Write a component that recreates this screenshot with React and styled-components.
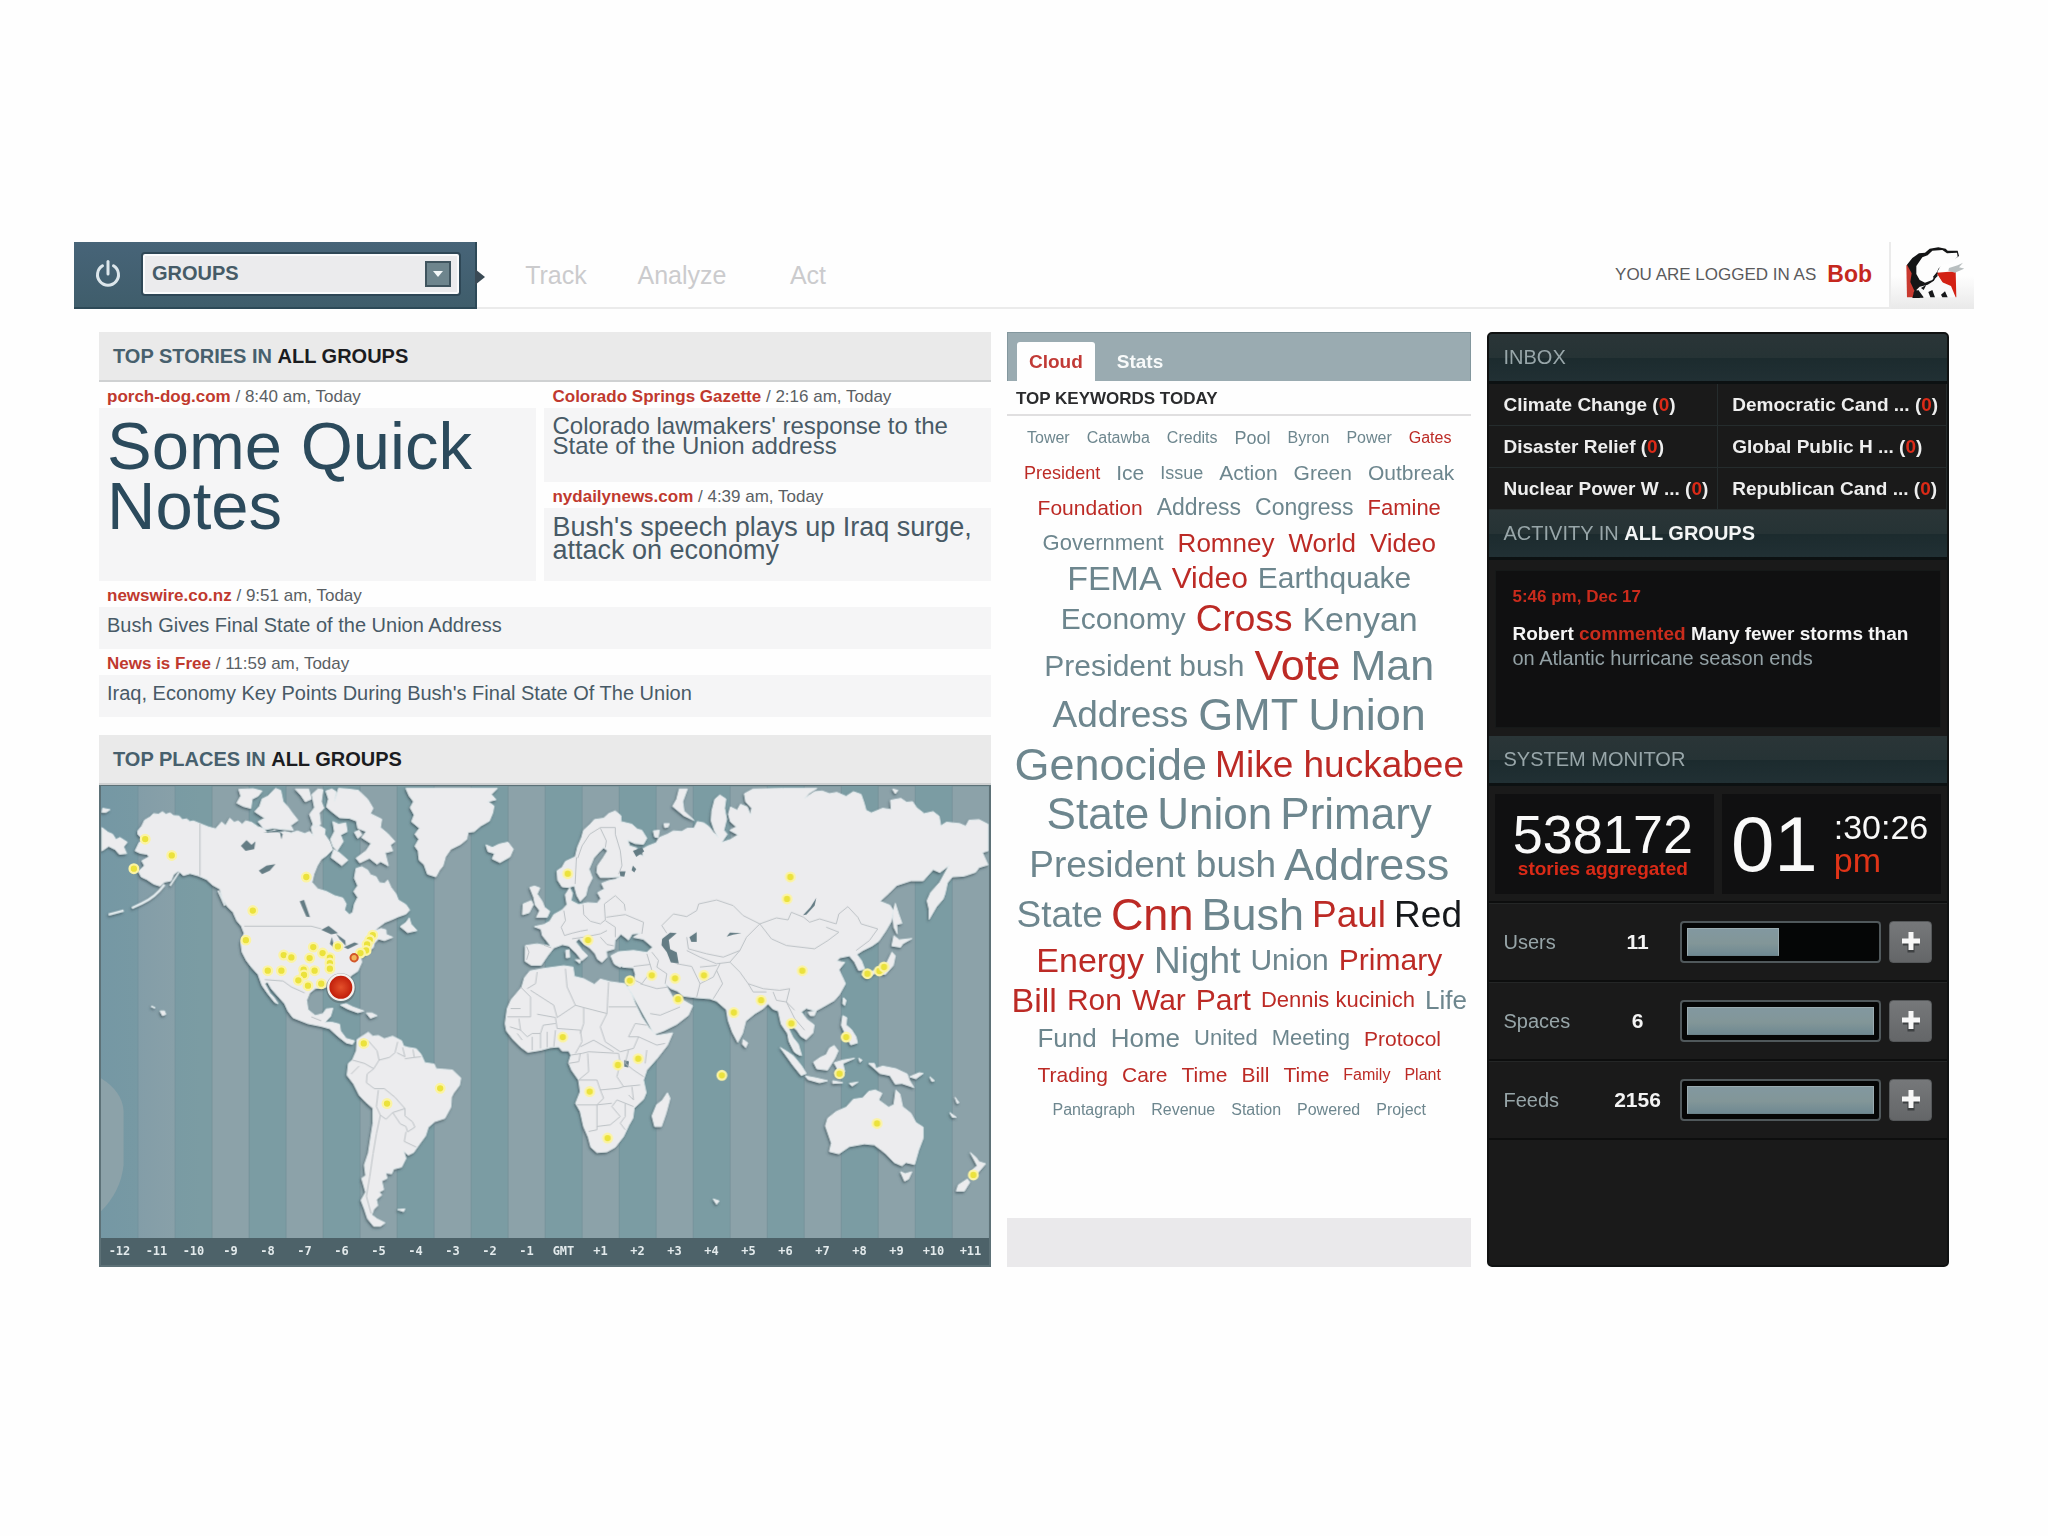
import React from 'react'
import styled, { createGlobalStyle } from 'styled-components'

const GlobalStyle = createGlobalStyle`
    * {
        box-sizing: border-box;
    }
    body {
        margin: 0;
        background-color: #FEFEFE;
        font-family: 'Liberation Sans', Arial, sans-serif;
    }
    h1, h2, h3, p, ul {
        margin: 0;
        padding: 0;
        font-weight: normal;
    }
    a {
        color: inherit;
        text-decoration: none;
    }
    button {
        font-family: inherit;
        cursor: pointer;
    }
`

const Page = styled.div`
    padding: 242px 74px;
`

const Header = styled.header`
    display: flex;
    height: 67px;
    border-bottom: 2px solid #EBEBEB;
`

const GroupBar = styled.div`
    position: relative;
    display: flex;
    align-items: center;
    gap: 19px;
    width: 403px;
    height: 67px;
    padding: 0 16px 2px 18px;
    background: linear-gradient(#476478, #3F5D6B);
    border-bottom: 2px solid #2D4957;
    border-right: 2px solid #2D4957;

    &::after {
        content: '';
        position: absolute;
        left: 100%;
        top: 27px;
        border: 8px solid transparent;
        border-left: 10px solid #3A4A55;
        border-right: none;
    }
`

const PowerButton = styled.button`
    display: flex;
    padding: 0;
    border: none;
    background: none;
`

const SelectBox = styled.div`
    position: relative;
    flex: 1;

    svg {
        position: absolute;
        right: 8px;
        top: 7px;
        pointer-events: none;
    }
`

const GroupSelect = styled.select`
    appearance: none;
    display: block;
    width: 100%;
    height: 40px;
    padding: 0 40px 2px 7px;
    border: 2px solid #FAFBFC;
    border-radius: 2px;
    background-color: #EBEBED;
    box-shadow: 0 0 0 2px #2E4756;
    color: #465B67;
    font-family: inherit;
    font-weight: 700;
    font-size: 20px;
`

const Nav = styled.nav`
    display: flex;
    flex: 1;
    align-items: center;
    padding-left: 16px;
    color: #CBCBCD;
    font-size: 25px;
`

const NavLink = styled.a`
    width: 126px;
    padding-top: 1px;
    text-align: center;
`

const Login = styled.div`
    display: flex;
    align-items: center;
    gap: 11px;
    padding-right: 17px;
    color: #5A5A5C;
    font-size: 17px;

    a {
        color: #C5281E;
        font-weight: 700;
        font-size: 23px;
    }
`

const Avatar = styled.div`
    width: 85px;
    height: 67px;
    padding: 4px 0 0 14px;
    border-left: 2px solid #EBEBEB;
    background: linear-gradient(#FEFEFE 50%, #E9E9E9);
`

const Main = styled.main`
    display: grid;
    grid-template-columns: 891fr 464fr 461fr;
    gap: 16px;
    padding: 23px 25px 0;
`

const Column = styled.div`
    display: flex;
    flex-direction: column;
    gap: 18px;
`

const PanelTitle = styled.h2`
    height: 50px;
    padding: 0 14px;
    border-bottom: 2px solid #CFD1D2;
    background-color: #EAEAEA;
    color: #47606D;
    font-weight: 700;
    font-size: 20px;
    line-height: 48px;

    strong {
        color: #1B1C1F;
    }
`

const TopStories = styled.div`
    display: grid;
    grid-template-columns: 437fr 446fr;
    column-gap: 8px;
`

const StoryStack = styled.div`
    display: flex;
    flex-direction: column;
`

const Story = styled.article`
    display: flex;
    flex-direction: column;
    flex: 1 1 auto;
`

const StoryMeta = styled.p`
    height: 26px;
    padding: 4px 8px 0;
    color: #5A6064;
    font-size: 17px;
    line-height: 22px;

    a {
        color: #C0392E;
        font-weight: 700;
    }
`

const StoryBody = styled.div`
    flex: 1;
    min-height: ${props => props.$minHeight}px;
    padding: 8px;
    background-color: #F5F5F6;
`

const StoryTitle = styled.h3`
    color: ${props => props.$size > 60 ? '#2B4A5C' : '#485A66'};
    font-size: ${props => props.$size}px;
    line-height: ${props => props.$line}px;
`

const MapBox = styled.div`
    border: 2px solid #5D7177;
    border-top-width: 1px;
    background-color: #7C9CA4;

    svg {
        display: block;
        width: 100%;
    }
`

const ZoneList = styled.div`
    display: grid;
    grid-template-columns: repeat(24, 1fr);
    height: 27px;
    background-color: #4D6269;
    color: #E3EAEC;
    font-family: 'DejaVu Sans Mono', monospace;
    font-weight: 700;
    font-size: 12px;
    line-height: 27px;
    text-align: center;
`

const CloudPanel = styled.section`
    display: flex;
    flex-direction: column;
`

const TabBar = styled.div`
    display: flex;
    align-items: flex-end;
    gap: 10px;
    height: 49px;
    padding-left: 9px;
    background-color: #9AABB1;
    border: 1px solid #83979E;
    border-bottom: none;
`

const Tab = styled.button`
    height: 39px;
    padding: 0 12px;
    border: none;
    border-radius: 3px 3px 0 0;
    background-color: ${props => props.$active ? '#FEFEFE' : 'transparent'};
    color: ${props => props.$active ? '#C13A36' : '#F8FAFA'};
    font-weight: 700;
    font-size: 19px;
`

const CloudTitle = styled.h2`
    height: 35px;
    padding-left: 9px;
    border-bottom: 2px solid #E0DFE0;
    color: #2A2B2D;
    font-weight: 700;
    font-size: 17px;
    line-height: 35px;
`

const Cloud = styled.div`
    flex: 1;
    padding-top: 4px;
`

const CloudRow = styled.div`
    display: flex;
    justify-content: center;
    align-items: center;
    gap: ${props => props.$gap}px;
    height: ${props => props.$height}px;
    white-space: nowrap;
`

const wordColors = { red: '#BC2A25', grey: '#6D868E', black: '#15181B' }

const Word = styled.a`
    color: ${props => wordColors[props.$tone]};
    font-size: ${props => props.$size}px;
    line-height: 1;
`

const CloudFooter = styled.div`
    height: 49px;
    background-color: #EAE9EB;
`

const Sidebar = styled.aside`
    display: flex;
    flex-direction: column;
    border: 2px solid #101212;
    border-radius: 5px;
    background-color: #1A1A1A;
    overflow: hidden;
`

const SideTitle = styled.h2`
    height: 50px;
    padding-left: 14px;
    border-bottom: 3px solid #0C1112;
    background: linear-gradient(#2A3537 0%, #263335 50%, #1C2B2E 52%, #213034 100%);
    color: #98A6A9;
    font-size: 20px;
    line-height: 46px;

    strong {
        color: #F3F5F5;
    }
`

const Inbox = styled.div`
    display: grid;
    grid-template-columns: 1fr 1fr;
`

const InboxLink = styled.a`
    height: 42px;
    padding-left: 14px;
    border-bottom: 1px solid #252C2D;
    border-right: 1px solid #252C2D;
    color: #EEEEEE;
    font-weight: 700;
    font-size: 19px;
    line-height: 42px;
    white-space: nowrap;

    em {
        color: #DB2A17;
        font-style: normal;
    }
`

const ActivityWrap = styled.div`
    padding: 10px 6px 8px;
`

const Activity = styled.div`
    min-height: 158px;
    padding: 14px 16px;
    border: 1px solid #161919;
    background-color: #101011;
`

const ActivityTime = styled.p`
    margin-bottom: 12px;
    color: #CB2B1C;
    font-weight: 700;
    font-size: 17px;
    line-height: 24px;
`

const ActivityText = styled.p`
    color: #F5F5F5;
    font-weight: 700;
    font-size: 19px;
    line-height: 25px;

    em {
        color: #C92C1C;
        font-style: normal;
    }
    span {
        color: #93A1A5;
        font-weight: 400;
        font-size: 20px;
    }
`

const Counters = styled.div`
    display: grid;
    grid-template-columns: 1fr 1fr;
    gap: 8px;
    padding: 8px 6px 7px;
    border-bottom: 2px solid #0D0E0E;
`

const Counter = styled.div`
    display: flex;
    align-items: center;
    justify-content: center;
    height: 100px;
    padding-right: 4px;
    background-color: #101011;
    color: #F9F9F9;
`

const StoryCount = styled.p`
    font-size: 54px;
    line-height: 50px;
    text-align: center;

    span {
        display: block;
        color: #DA2A17;
        font-weight: 700;
        font-size: 19px;
        line-height: 20px;
    }
`

const Clock = styled.div`
    display: flex;
    align-items: center;
    gap: 16px;
`

const Hour = styled.span`
    font-size: 78px;
    line-height: 80px;
`

const Minutes = styled.span`
    font-size: 34px;
    line-height: 33px;

    em {
        display: block;
        color: #E03418;
        font-style: normal;
    }
`

const MonitorRow = styled.div`
    display: grid;
    grid-template-columns: 91px 70px 1fr 43px;
    align-items: center;
    column-gap: 8px;
    height: 79px;
    padding: 0 15px 0 14px;
    border-top: 1px solid #242626;
    border-bottom: 2px solid #0D0E0E;
    color: #97A5A8;
    font-size: 20px;

    strong {
        color: #F4F4F4;
        font-size: 21px;
        text-align: center;
    }
`

const Meter = styled.div`
    height: 42px;
    padding: 5px;
    border: 2px solid #50585B;
    border-radius: 4px;
    background-color: #050606;
`

const MeterFill = styled.div`
    height: 100%;
    border: 1px solid #9AABB0;
    border-bottom-color: #6B8289;
    background: linear-gradient(#8298A0, #829698 55%, #6F8992);
`

const AddButton = styled.button`
    display: flex;
    align-items: center;
    justify-content: center;
    height: 42px;
    padding: 0;
    border: 1px solid #55585A;
    border-radius: 4px;
    background: linear-gradient(#76787A, #646668);
`

const zones = ['-12', '-11', '-10', '-9', '-8', '-7', '-6', '-5', '-4', '-3', '-2', '-1', 'GMT',
    '+1', '+2', '+3', '+4', '+5', '+6', '+7', '+8', '+9', '+10', '+11']

// each word is [text, font size, tone], grey when no tone is given
const cloudRows = [
    { height: 35, gap: 17, words: [['Tower', 16], ['Catawba', 16], ['Credits', 16], ['Pool', 18], ['Byron', 16], ['Power', 16], ['Gates', 16, 'red']] },
    { height: 35, gap: 16, words: [['President', 18, 'red'], ['Ice', 21], ['Issue', 18], ['Action', 21], ['Green', 21], ['Outbreak', 21]] },
    { height: 35, gap: 14, words: [['Foundation', 21, 'red'], ['Address', 23], ['Congress', 23], ['Famine', 22, 'red']] },
    { height: 35, gap: 14, words: [['Government', 22], ['Romney', 26, 'red'], ['World', 26, 'red'], ['Video', 26, 'red']] },
    { height: 36, gap: 10, words: [['FEMA', 34], ['Video', 30, 'red'], ['Earthquake', 30]] },
    { height: 45, gap: 10, words: [['Economy', 30], ['Cross', 37, 'red'], ['Kenyan', 34]] },
    { height: 49, gap: 10, words: [['President bush', 30], ['Vote', 43, 'red'], ['Man', 43]] },
    { height: 49, gap: 10, words: [['Address', 37], ['GMT', 45], ['Union', 45]] },
    { height: 50, gap: 8, words: [['Genocide', 45], ['Mike huckabee', 37, 'red']] },
    { height: 50, gap: 8, words: [['State', 44], ['Union', 44], ['Primary', 44]] },
    { height: 50, gap: 8, words: [['President bush', 37], ['Address', 45]] },
    { height: 50, gap: 8, words: [['State', 37], ['Cnn', 45, 'red'], ['Bush', 45], ['Paul', 37, 'red'], ['Red', 37, 'black']] },
    { height: 42, gap: 10, words: [['Energy', 34, 'red'], ['Night', 37], ['Union', 30], ['Primary', 30, 'red']] },
    { height: 38, gap: 10, words: [['Bill', 34, 'red'], ['Ron', 30, 'red'], ['War', 30, 'red'], ['Part', 30, 'red'], ['Dennis kucinich', 22, 'red'], ['Life', 26]] },
    { height: 38, gap: 14, words: [['Fund', 26], ['Home', 26], ['United', 22], ['Meeting', 22], ['Protocol', 21, 'red']] },
    { height: 35, gap: 14, words: [['Trading', 21, 'red'], ['Care', 21, 'red'], ['Time', 21, 'red'], ['Bill', 21, 'red'], ['Time', 21, 'red'], ['Family', 16, 'red'], ['Plant', 16, 'red']] },
    { height: 35, gap: 16, words: [['Pantagraph', 16], ['Revenue', 16], ['Station', 16], ['Powered', 16], ['Project', 16]] },
]

const inbox = ['Climate Change', 'Democratic Cand ...', 'Disaster Relief', 'Global Public H ...', 'Nuclear Power W ...', 'Republican Cand ...']

const monitors = [
    { name: 'Users', count: 11, fill: 49 },
    { name: 'Spaces', count: 6, fill: 100 },
    { name: 'Feeds', count: 2156, fill: 100 },
]

const westLand = [
    // North and Central America
    'M138 180L150 165 158 148 175 138 185 128 200 130 212 122 222 130 235 126 245 134 262 135 272 146 285 144 295 152 305 150 325 158 350 168 372 174 390 153 402 164 415 142 428 154 440 150 452 160 462 150 480 154 500 168 515 172 528 186 550 178 562 186 580 182 600 186 618 180 640 188 655 182 666 195 660 170 672 150 685 165 702 175 700 190 715 212 724 236 705 255 690 265 678 285 668 310 662 335 680 355 705 362 730 375 755 382 765 400 760 418 775 432 785 425 790 400 800 380 788 362 800 345 790 322 795 293 812 288 830 298 838 312 855 318 865 336 880 338 890 328 900 350 915 370 922 388 945 402 956 418 945 430 922 438 900 448 882 455 862 470 850 482 870 474 885 478 886 492 905 500 880 510 862 505 850 518 846 532 830 542 822 552 808 560 812 575 800 602 780 615 766 635 758 655 765 682 750 672 738 648 715 645 698 652 672 654 655 668 646 690 650 718 672 736 695 730 705 716 725 714 718 738 700 757 722 756 745 762 748 782 765 805 790 812 784 822 766 818 740 798 715 775 690 768 650 760 605 742 590 722 580 700 562 680 540 655 528 634 520 640 535 668 548 682 560 700 550 696 528 668 512 645 500 612 480 590 465 570 452 545 448 515 458 488 450 467 436 450 425 425 408 408 392 384 385 355 362 342 345 326 320 315 295 308 275 314 260 300 245 312 238 330 218 334 205 346 186 340 165 326 148 318 140 302 158 285 150 270 172 258 165 250 145 247 130 240 142 215 155 208 138 190Z',
    // Arctic islands
    'M442 55L485 53 512 60 500 75 482 84 478 112 455 106 436 96 448 75Z',
    'M512 84L530 75 552 52 568 58 575 92 590 108 602 125 620 148 598 164 606 178 575 176 545 172 520 176 500 152 520 142 490 122 505 105Z',
    'M612 54L652 54 660 84 642 92 630 74Z',
    'M655 130L670 110 662 70 680 54 695 56 690 92 698 112 684 126 688 160 670 170 662 150Z',
    'M704 60L722 54 735 62 730 90 742 52 770 54 802 58 830 85 846 112 838 128 872 145 868 170 890 188 912 212 898 222 905 240 882 246 892 285 868 272 858 280 835 262 806 276 795 262 825 240 840 218 812 200 826 182 800 172 796 150 775 142 745 140 722 122 706 108 712 84Z',
    'M725 152L742 160 764 156 768 182 748 192 756 212 738 240 726 228 718 205 730 182Z',
    'M728 236L745 246 770 268 752 284 720 260Z',
    'M790 184L804 178 812 192 800 202Z',
    // Greenland
    'M945 52L1220 52 1202 70 1216 86 1192 92 1210 105 1206 126 1196 150 1170 165 1150 182 1132 184 1128 205 1110 220 1080 235 1064 258 1056 286 1046 298 1035 318 1010 310 1000 282 985 268 982 240 972 226 984 205 972 190 986 172 962 152 970 132 958 110 968 92 955 75Z',
    // Iceland
    'M1186 222L1205 230 1225 220 1252 214 1268 235 1258 258 1228 275 1205 264 1212 248 1192 242Z',
    // Newfoundland
    'M928 468L945 456 955 442 960 460 978 480 950 486Z',
    // Chukotka
    'M30 170L48 184 62 190 72 206 84 200 106 214 95 228 104 248 82 250 70 236 50 226 30 240Z',
    'M32 112L54 116 42 124 30 124Z',
    // Caribbean and Hawaii
    'M748 704L765 700 785 710 818 722 800 727 770 716Z',
    'M826 728L842 728 858 736 838 744Z',
    'M205 722L218 722 222 732 212 736Z',
]

const southLand = [
    'M798 88L818 75 832 66 845 78 862 76 880 86 905 78 932 92 938 108 952 112 976 116 990 132 1002 158 1030 162 1036 176 1060 178 1085 180 1110 204 1106 226 1088 250 1082 262 1080 292 1062 325 1032 335 1012 352 1004 378 985 404 968 428 952 436 938 424 945 446 932 472 908 478 902 492 884 490 888 506 872 514 878 540 864 548 872 556 856 570 860 588 848 600 842 616 858 628 882 640 868 650 848 650 830 628 820 598 810 572 824 548 812 506 824 498 820 466 832 430 838 390 846 340 846 295 824 276 805 256 788 222 768 196 772 160 784 150 796 122Z',
    'M920 600L942 598 938 606Z',
]

const eastLand = [
    // Europe and Asia
    'M75 525L110 520 152 528 138 510 126 495 122 476 102 468 130 462 148 452 160 432 185 418 200 402 195 372 208 352 216 368 212 390 235 402 262 396 290 398 302 384 292 366 312 355 304 338 325 330 345 326 372 312 355 318 325 320 300 320 290 305 292 285 308 262 322 240 310 230 296 244 280 262 266 295 276 322 262 350 256 375 240 392 230 375 222 345 205 350 185 348 172 328 170 300 185 290 195 272 225 258 232 228 244 200 250 178 270 160 282 146 310 142 325 128 345 120 362 134 362 152 395 160 412 175 425 178 440 202 430 220 405 218 382 208 388 225 410 232 408 248 430 256 425 236 442 226 468 216 478 200 502 190 520 180 545 182 562 172 582 172 592 152 612 156 628 168 640 184 655 200 644 180 634 150 636 120 645 85 660 72 678 84 674 112 680 145 672 178 682 190 665 215 692 206 715 192 690 178 710 168 692 152 686 130 692 108 712 118 722 100 742 108 752 132 756 112 738 92 734 68 760 54 850 52 952 52 930 66 915 82 945 62 968 60 990 68 1012 64 1040 76 1062 62 1085 70 1094 96 1100 118 1116 126 1150 112 1176 116 1174 88 1205 82 1222 94 1240 92 1252 110 1275 128 1302 122 1320 136 1325 165 1342 154 1382 158 1400 166 1410 148 1440 146 1467 160 1467 240 1450 245 1467 282 1440 290 1430 304 1395 316 1360 318 1345 336 1338 368 1332 385 1312 408 1290 446 1290 415 1284 390 1295 365 1322 335 1350 284 1322 305 1302 296 1272 330 1235 330 1192 344 1168 368 1142 392 1172 404 1182 420 1176 452 1160 480 1138 512 1118 526 1090 540 1072 552 1086 570 1096 596 1078 600 1066 575 1050 556 1020 562 1012 572 1036 576 1018 598 1028 618 1038 640 1020 672 1005 690 970 710 948 722 920 714 905 725 922 748 944 764 940 788 920 808 904 798 892 780 875 765 868 778 880 802 896 822 906 856 888 848 872 820 864 790 845 762 836 722 820 716 805 700 790 715 765 730 738 752 728 790 714 816 698 786 685 750 680 718 650 692 630 685 590 682 550 677 532 662 512 654 495 640 515 675 525 690 550 690 578 706 565 735 530 762 490 782 462 792 446 762 420 715 395 670 380 650 402 640 406 612 400 592 370 590 342 580 332 556 355 544 400 540 440 546 458 530 430 506 400 500 420 488 396 490 385 508 362 490 344 510 342 535 318 542 320 560 305 575 292 566 285 550 268 532 250 520 236 504 226 514 246 540 262 556 245 570 228 548 205 526 186 522 160 532 142 555 122 584 92 584 74 572Z',
    // Africa
    'M88 602L130 594 190 586 218 590 222 618 250 625 282 642 300 626 330 634 375 640 395 672 405 700 425 740 446 772 470 796 518 788 502 825 470 866 440 900 430 930 438 968 430 988 402 1014 398 1045 386 1066 370 1100 345 1132 320 1146 290 1148 272 1132 264 1102 250 1070 240 1025 226 1000 240 965 235 930 214 900 205 878 212 855 205 842 185 842 175 830 150 832 120 840 82 846 60 830 38 808 18 782 14 760 20 715 32 688 64 650 72 622Z',
    // islands
    'M502 968L510 985 498 1030 484 1070 464 1070 456 1038 470 1004 486 992Z',
    'M538 54L562 54 548 92 552 120 582 148 552 134 518 106 530 85Z',
    'M88 350L102 346 118 352 110 370 125 392 132 410 148 422 140 440 108 440 118 420 104 402 100 380Z',
    'M68 400L92 390 98 402 86 426 66 432Z',
    'M1188 398L1198 430 1208 458 1192 462 1194 490 1184 470 1180 430Z',
    'M1184 496L1200 508 1238 504 1210 520 1204 530 1178 526Z',
    'M1178 545L1188 556 1182 585 1158 612 1130 606 1104 624 1088 612 1132 598 1162 578Z',
    'M196 540L206 538 208 560 198 562Z', 'M225 568L242 568 238 578Z',
    'M1032 682L1040 690 1036 705 1030 700Z', 'M926 726L950 722 944 736 932 736Z',
    'M1030 736L1042 742 1040 764 1056 778 1070 800 1074 818 1054 824 1042 800 1026 765Z',
    'M730 808L744 818 738 832 728 822Z',
    'M1180 54L1196 58 1188 68Z', 'M492 158L508 158 504 168 494 170Z', 'M460 180L478 178 474 200 464 198Z',
    'M345 582L368 582 360 590Z',
]

const oceaniaLand = [
    'M985 325L1010 305 1040 292 1062 268 1090 264 1108 244 1128 240 1148 250 1138 270 1168 292 1184 284 1190 240 1202 252 1210 290 1235 310 1250 338 1272 352 1272 385 1258 422 1246 464 1220 458 1208 468 1185 458 1160 432 1145 420 1125 405 1095 402 1050 410 1018 432 990 425 996 400 978 348Z',
    'M1204 486L1218 492 1238 486 1228 508 1216 514Z',
    'M1414 428L1432 444 1440 456 1460 462 1436 490 1414 486 1435 468Z',
    'M1405 508L1412 518 1396 544 1372 544 1378 526Z',
    'M1108 160L1125 160 1130 175 1150 168 1190 176 1224 192 1230 210 1244 232 1208 220 1188 222 1172 196 1142 190Z',
    'M1232 200L1260 188 1272 190 1250 206Z', 'M1292 200L1306 212 1298 214Z',
    'M942 156L962 142 980 134 990 114 1004 106 1016 122 1006 145 984 180 952 176Z',
    'M842 112L862 124 882 138 905 166 920 190 905 196 880 165Z',
    'M918 198L950 204 984 212 960 218 925 208Z',
    'M1004 158L1030 150 1066 144 1030 160 1036 185 1020 200 1006 190 1014 176Z',
    'M1000 212L1030 218 1000 220Z', 'M1050 220L1076 216 1058 228Z', 'M1078 144L1088 150 1082 156Z',
    'M865 70L880 95 900 135 884 125 868 92Z',
    'M1368 262L1380 278 1374 280Z', 'M1352 308L1372 322 1360 322Z', 'M640 568L658 574 650 584Z',
]

const westLines = 'M325 158V315 M458 467H660L690 475 M520 628L575 632 600 650 640 668 M660 740L690 752'

const southLines = 'M832 92L858 122 864 150 848 176 820 160 784 150 M848 176L828 192 826 218 850 236 880 236 912 262 942 296 905 308 885 328 868 316 856 290 862 240 M905 308L928 342 945 350 950 366 972 352 965 336 942 318 942 296 M945 366L940 395 976 412 M868 316L856 372 846 432 836 500 826 560 840 612 M864 150L895 142 912 128 920 95 M935 112L942 140 918 128 M966 118L970 142 942 146 M990 140L970 142 M780 192L804 168'

const eastLines = 'M78 528L85 545 78 568 M130 524L152 532 M228 260L224 340 M232 262L245 225 268 190 300 170 345 170 345 190 360 240 365 285 355 310 M300 172L318 210 315 230 M190 420L195 450 182 470 192 495 215 488 240 482 262 478 M248 402L250 432 270 452 300 460 315 448 312 400 M312 400L345 375 372 400 375 420 M318 440L375 432 430 455 425 490 M315 450L345 470 345 500 M215 505L250 500 300 490 320 480 M300 500L320 522 340 526 M485 465L520 430 560 438 590 420 596 400 650 388 700 405 730 435 780 460 830 442 865 448 875 425 912 440 930 455 960 445 1010 460 1018 430 1045 408 1075 440 1085 460 1135 475 1110 510 1070 540 M780 460L815 505 860 525 945 535 985 510 1018 485 980 470 M485 465L500 488 M780 460L740 500 720 540 670 560 620 550 565 535 560 500 M560 540L600 560 650 580 690 575 720 605 745 640 790 655 840 660 870 655 860 695 885 720 M720 540L690 575 M455 545L475 570 470 590 500 610 495 640 M440 550L455 600 425 640 405 630 M400 588L450 582 M530 580L575 588 600 640 590 680 M600 640L640 620 660 580 M650 600L668 640 640 685 M600 590L650 585 M420 640L470 655 505 650 M450 730L480 735 540 710 M820 665L830 690 860 695 885 745 915 780 M745 640L760 665 800 665'

const africaLines = 'M110 605L105 640 80 655 M60 650L90 680V740H20 M90 660L160 705 170 742 225 705 200 650 195 595 M225 705L250 712 320 730 325 635 M325 710H410 M250 712L250 760 240 790 M320 730L300 770 315 815 M110 732L165 742 170 775 240 780 M28 770L60 780 80 800 95 790 120 790 128 765 165 760 M50 790L65 810 M95 800V840 M120 790V835 M140 785V832 M165 780L160 830 M240 780L245 815 225 850 M240 830L280 810 340 845 M315 815L360 845 400 835 415 800 385 800 405 760 440 765 M415 800L470 825 495 820 M440 840L435 880 M385 840L375 880 400 900 430 920 M212 855L245 850 265 845 355 850 360 880 350 920 370 950 420 945 M235 930L265 905 262 850 M235 930L290 930 300 960 310 985 290 1005 230 1005 M300 960L355 955 370 950 M290 1005V1080L265 1085 M290 1070L330 1065 360 1040 335 1010 350 990 375 1000 375 1040 360 1060 375 1080 M290 1005L335 1000 M395 950L400 990 385 975 M375 1000L400 1010 M205 880L235 875 240 850 M30 715H60 M55 745L60 780'

const lakes = [
    'M448 225L465 208 480 222 492 212 488 235 462 240Z', 'M502 300L525 285 552 280 535 300 512 310Z',
    'M625 392L638 388 656 440 645 438Z', 'M690 478L712 466 740 488 720 492Z', 'M722 500L730 534 716 520Z',
    'M735 490L762 510 764 526 745 506Z', 'M758 530L790 516 802 520 770 536Z', 'M565 182L574 190 570 206Z', 'M515 185L560 178 562 184Z',
]

const eastLakes = [
    'M486 505L510 486 530 488 506 508 510 536 530 546 536 580 512 576 500 545 484 524Z',
    'M568 500L590 485 590 514 574 514Z', 'M680 498L690 486 725 488 700 492Z',
    'M910 434L932 410 950 382 945 405 920 432Z', 'M398 285L408 295 402 305 394 298Z', 'M358 302L376 302 372 318 360 316Z',
    'M372 870L386 874 384 892 372 890Z', 'M398 240L425 230 432 242 408 258Z',
]

const westDots = [[160, 205], [240, 254], [126, 294], [645, 319], [484, 420], [463, 509], [845, 494], [836, 508], [828, 522], [825, 540], [808, 548],
    [666, 530], [740, 528], [577, 554], [600, 561], [655, 563], [694, 548], [716, 562], [716, 578], [529, 601], [570, 601], [637, 598],
    [670, 601], [716, 595], [638, 614], [621, 630], [650, 646], [690, 640], [818, 820], [1048, 955], [888, 1001]]

const eastDots = [[202, 309], [872, 319], [862, 385], [263, 509], [389, 631], [455, 615], [525, 624], [612, 615], [534, 687], [908, 601],
    [1104, 610], [1140, 602], [1154, 590], [784, 690], [702, 727], [875, 760], [187, 801], [414, 866], [353, 885], [268, 965],
    [322, 1105], [666, 916], [1040, 801], [1020, 911], [1133, 1061], [1423, 1216]]

function Lands({ shapes }) {
    return shapes.map(d => <path key={d} d={d} />)
}

function Dots({ points }) {
    return points.map(([x, y]) => <circle key={`${x}-${y}`} cx={x} cy={y} r="13" />)
}

function WorldMap() {
    return (
        <svg viewBox="0 0 2673 1362" role="img" aria-label="World map">
            <defs>
                <filter id="landShadow" x="-2%" y="-2%" width="104%" height="104%">
                    <feDropShadow dx="-3" dy="5" stdDeviation="3" floodColor="#3E555C" floodOpacity="0.8" />
                </filter>
                <linearGradient id="seaTint">
                    <stop offset="0" stopColor="#6F93A5" stopOpacity="0.5" />
                    <stop offset="1" stopColor="#6F93A5" stopOpacity="0" />
                </linearGradient>
                <radialGradient id="hotSpot">
                    <stop offset="0" stopColor="#E4502A" />
                    <stop offset="1" stopColor="#BE1A08" />
                </radialGradient>
            </defs>
            <rect width="2673" height="1362" fill="#7B9CA3" />
            {zones.map((zone, i) => i % 2 === 1 && (
                <rect key={zone} x={i * 111.4} width="111.4" height="1362" fill="#8CA2A9" stroke="#738F97" strokeWidth="2" />
            ))}
            <rect width="300" height="1362" fill="url(#seaTint)" />
            <path d="M0 480Q65 520 68 580V740Q60 820 0 880Z" transform="translate(0 400)" fill="#8CA2A9" />
            <g fill="#ECECEE" stroke="#E2EBEE" strokeWidth="3" strokeLinejoin="round" filter="url(#landShadow)">
                <g transform="translate(-27 -45)">
                    <Lands shapes={westLand} />
                    <path d="M218 342Q190 380 150 398L120 412 M95 420L50 432" fill="none" strokeWidth="7" />
                    <path d="M262 304L235 345 M380 360L400 405 M178 708L190 713" fill="none" strokeWidth="5" />
                </g>
                <g transform="translate(-27 675)"><Lands shapes={southLand} /></g>
                <g transform="translate(1203 -45)"><Lands shapes={eastLand} /></g>
                <g transform="translate(1203 675)"><Lands shapes={oceaniaLand} /></g>
            </g>
            <g fill="#647C84">
                <g transform="translate(-27 -45)"><Lands shapes={lakes} /></g>
                <g transform="translate(1203 -45)"><Lands shapes={eastLakes} /></g>
            </g>
            <g fill="none" stroke="#BCC1C5" strokeWidth="3" strokeLinejoin="round">
                <path transform="translate(-27 -45)" d={westLines} />
                <path transform="translate(-27 675)" d={southLines} />
                <path transform="translate(1203 -45)" d={eastLines} />
                <path transform="translate(1203 -45)" d={africaLines} />
            </g>
            <g fill="#EBE23C" stroke="#FBF3A4" strokeWidth="7">
                <g transform="translate(-27 -45)"><Dots points={westDots} /></g>
                <g transform="translate(1203 -45)"><Dots points={eastDots} /></g>
            </g>
            <circle cx="762" cy="517" r="11" fill="#F3B45A" stroke="#D2562A" strokeWidth="6" />
            <circle cx="722" cy="609" r="45" fill="#566166" opacity="0.5" />
            <circle cx="722" cy="606" r="38" fill="url(#hotSpot)" stroke="#F3F1EE" strokeWidth="7" />
        </svg>
    )
}

function PowerIcon() {
    return (
        <svg width="32" height="32" viewBox="0 0 32 32" fill="none" stroke="#DCE6EB" strokeWidth="3" strokeLinecap="round">
            <path d="M10.5 7.8A10.5 10.5 0 1 0 21.5 7.8" />
            <path d="M16 3.5V16" />
        </svg>
    )
}

function BearLogo() {
    return (
        <svg width="59" height="52" viewBox="0 0 177 156" role="img" aria-label="Bear">
            <path d="M4 58L24 50 30 154H6Z" fill="#C93A30" />
            <path d="M94 80L152 76 154 154 128 150 112 108Z" fill="#D32114" />
            <path d="M6 56L22 36 42 22 60 20 74 8 100 4 122 8 128 14 158 14 162 30 154 36 112 50 98 76 94 100 68 116 44 122 34 132 56 156H22L28 134 16 108 20 82Z" fill="#141516" />
            <path d="M52 34L68 28 82 14 112 12 126 22 156 20 158 32 138 50 112 58 100 68 94 84 82 102 60 110 44 102 34 84 34 60Z" fill="#FDFDFD" />
            <path d="M132 66L158 58 174 50 162 64 178 68 150 80 130 74Z" fill="#B9BFC0" />
            <path d="M58 126L84 112 96 84 110 108 138 120 152 154H44Z" fill="#FAFAFA" />
            <path d="M70 138L82 132 90 154H76Z M108 146L120 136 128 154H112Z M48 126L64 116 56 132Z M26 138L40 132 56 154H28Z M84 92L96 78 98 90 88 100Z" fill="#17181A" />
        </svg>
    )
}

function StoryItem({ source, time, title, size = 20, line = 20, minHeight = 42 }) {
    return (
        <Story>
            <StoryMeta><a href="#source">{source}</a> / {time}, Today</StoryMeta>
            <StoryBody $minHeight={minHeight}>
                <StoryTitle $size={size} $line={line}><a href="#story">{title}</a></StoryTitle>
            </StoryBody>
        </Story>
    )
}

export default function App() {
    return (
        <>
            <GlobalStyle />
            <Page>
                <Header>
                    <GroupBar>
                        <PowerButton aria-label="Log out"><PowerIcon /></PowerButton>
                        <SelectBox>
                            <GroupSelect aria-label="Groups">
                                <option>GROUPS</option>
                            </GroupSelect>
                            <svg width="26" height="26" viewBox="0 0 26 26">
                                <rect x="1" y="1" width="24" height="24" fill="#6E858D" stroke="#3F545E" strokeWidth="2" />
                                <path d="M8 10H18L13 16Z" fill="#F4F8F9" />
                            </svg>
                        </SelectBox>
                    </GroupBar>
                    <Nav>
                        <NavLink href="#track">Track</NavLink>
                        <NavLink href="#analyze">Analyze</NavLink>
                        <NavLink href="#act">Act</NavLink>
                    </Nav>
                    <Login>YOU ARE LOGGED IN AS <a href="#bob">Bob</a></Login>
                    <Avatar><BearLogo /></Avatar>
                </Header>

                <Main>
                    <Column>
                        <section>
                            <PanelTitle>TOP STORIES IN <strong>ALL GROUPS</strong></PanelTitle>
                            <TopStories>
                                <StoryItem source="porch-dog.com" time="8:40 am" title="Some Quick Notes" size={67} line={60} />
                                <StoryStack>
                                    <StoryItem source="Colorado Springs Gazette" time="2:16 am" title="Colorado lawmakers' response to the State of the Union address" size={24} line={20} minHeight={74} />
                                    <StoryItem source="nydailynews.com" time="4:39 am" title="Bush's speech plays up Iraq surge, attack on economy" size={27} line={23} minHeight={73} />
                                </StoryStack>
                            </TopStories>
                            <StoryItem source="newswire.co.nz" time="9:51 am" title="Bush Gives Final State of the Union Address" />
                            <StoryItem source="News is Free" time="11:59 am" title="Iraq, Economy Key Points During Bush's Final State Of The Union" />
                        </section>
                        <section>
                            <PanelTitle>TOP PLACES IN <strong>ALL GROUPS</strong></PanelTitle>
                            <MapBox>
                                <WorldMap />
                                <ZoneList>
                                    {zones.map(zone => <span key={zone}>{zone}</span>)}
                                </ZoneList>
                            </MapBox>
                        </section>
                    </Column>

                    <CloudPanel>
                        <TabBar>
                            <Tab $active>Cloud</Tab>
                            <Tab>Stats</Tab>
                        </TabBar>
                        <CloudTitle>TOP KEYWORDS TODAY</CloudTitle>
                        <Cloud>
                            {cloudRows.map((row, i) => (
                                <CloudRow key={i} $height={row.height} $gap={row.gap}>
                                    {row.words.map(([text, size, tone = 'grey'], j) => (
                                        <Word key={j} href="#keyword" $size={size} $tone={tone}>{text}</Word>
                                    ))}
                                </CloudRow>
                            ))}
                        </Cloud>
                        <CloudFooter />
                    </CloudPanel>

                    <Sidebar>
                        <SideTitle>INBOX</SideTitle>
                        <Inbox>
                            {inbox.map(name => (
                                <InboxLink key={name} href="#inbox">{name} (<em>0</em>)</InboxLink>
                            ))}
                        </Inbox>
                        <SideTitle>ACTIVITY IN <strong>ALL GROUPS</strong></SideTitle>
                        <ActivityWrap>
                            <Activity>
                                <ActivityTime>5:46 pm, Dec 17</ActivityTime>
                                <ActivityText>
                                    Robert <em>commented</em> Many fewer storms than <span>on Atlantic hurricane season ends</span>
                                </ActivityText>
                            </Activity>
                        </ActivityWrap>
                        <SideTitle>SYSTEM MONITOR</SideTitle>
                        <Counters>
                            <Counter>
                                <StoryCount>538172<span>stories aggregated</span></StoryCount>
                            </Counter>
                            <Counter>
                                <Clock>
                                    <Hour>01</Hour>
                                    <Minutes>:30:26<em>pm</em></Minutes>
                                </Clock>
                            </Counter>
                        </Counters>
                        {monitors.map(item => (
                            <MonitorRow key={item.name}>
                                <span>{item.name}</span>
                                <strong>{item.count}</strong>
                                <Meter role="progressbar" aria-label={item.name} aria-valuenow={item.fill}>
                                    <MeterFill style={{ width: `${item.fill}%` }} />
                                </Meter>
                                <AddButton aria-label={`Add ${item.name}`}>
                                    <svg width="22" height="24" viewBox="0 0 22 24">
                                        <path d="M3 14H9V21H13V14H19" fill="none" stroke="#3E4143" strokeWidth="3" />
                                        <path d="M11 2V20M2 11H20" stroke="#F7F7F7" strokeWidth="5" />
                                    </svg>
                                </AddButton>
                            </MonitorRow>
                        ))}
                    </Sidebar>
                </Main>
            </Page>
        </>
    )
}
